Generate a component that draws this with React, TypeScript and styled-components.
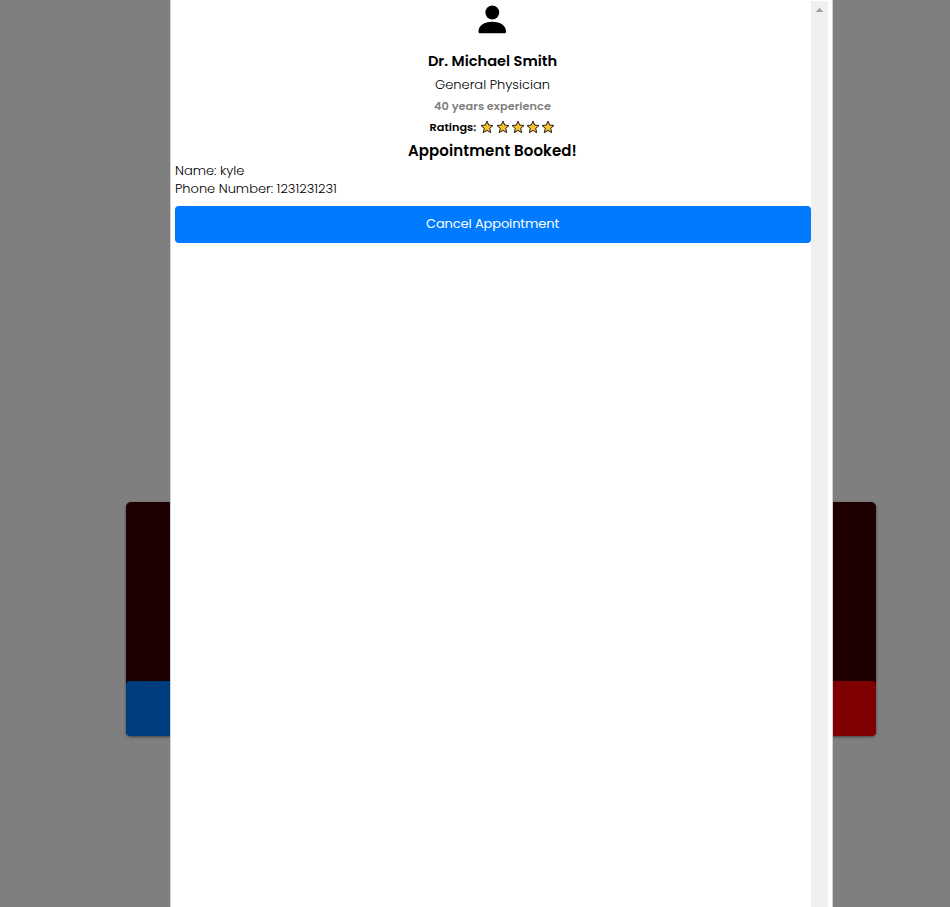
import React from 'react';
import styled, { createGlobalStyle } from 'styled-components';

const GlobalStyle = createGlobalStyle`
  * { box-sizing: border-box; }
  body {
    margin: 0;
    overflow: hidden;
    background: #fff;
    font-family: Poppins, Inter, sans-serif;
    color: #000;
  }
`;

const Page = styled.main`
  height: 907px;
  padding: 502px 74px 0 126px;
`;

const Card = styled.section`
  display: flex;
  flex-direction: column;
  height: 234px;
  background: #3c0000;
  border-radius: 5px;
  box-shadow: 0 1px 3px rgba(0, 0, 0, 0.5);
`;

const CardActions = styled.div`
  display: grid;
  grid-template-columns: 1fr 1fr;
  height: 55px;
  margin-top: auto;
`;

const CardAction = styled.div<{ $color: string }>`
  background: ${({ $color }) => $color};
  border-radius: 4px;
`;

const Overlay = styled.div`
  position: fixed;
  inset: 0;
  display: flex;
  padding-left: 170px;
  background: rgba(0, 0, 0, 0.5);
`;

const Modal = styled.div`
  display: flex;
  width: 663px;
  height: 100%;
  padding: 0 4px;
  background: #fff;
  border: solid #d2d2d2;
  border-width: 0 1px;
`;

const Content = styled.div`
  display: flex;
  flex-direction: column;
  width: 636px;
`;

const ScrollTrack = styled.div`
  display: flex;
  justify-content: center;
  width: 17px;
  margin-top: 1px;
  padding-top: 7px;
  background: #f0f0f0;
`;

const Avatar = styled.svg`
  display: block;
  align-self: center;
  width: 28px;
  height: 28px;
  margin: 5px 2px 17px 0;
  overflow: visible;
`;

const Line = styled.div<{ $size: number; $height: number; $weight?: number; $spacing?: number; $color?: string; $left?: boolean }>`
  display: flex;
  align-items: center;
  justify-content: ${({ $left }) => ($left ? 'flex-start' : 'center')};
  height: ${({ $height }) => $height}px;
  padding-right: 1px;
  font-size: ${({ $size }) => $size}px;
  font-weight: ${({ $weight = 400 }) => $weight};
  letter-spacing: ${({ $spacing = 0 }) => $spacing}px;
  color: ${({ $color = '#000' }) => $color};
  white-space: nowrap;
`;

const Stars = styled.span`
  display: flex;
  gap: 1.3px;
  margin-left: 4px;
`;

const CancelButton = styled.button`
  height: 37px;
  margin: 8px 0 0;
  padding: 0 1px 2px 0;
  border: 0;
  border-radius: 4px;
  background: #007bff;
  color: #fff;
  font: inherit;
  font-size: 13px;
  letter-spacing: -0.12px;
`;

const Star = () => (
  <svg width="14" height="14" viewBox="0 0 14 14">
    <path
      d="M7 1.1 8.7 5.1 13 5.5 9.7 8.3 10.7 12.7 7 10.4 3.3 12.7 4.3 8.3 1 5.5 5.3 5.1Z"
      fill="#fcc02e"
      stroke="#252018"
      strokeWidth="1"
      strokeLinejoin="round"
    />
  </svg>
);

export default function App() {
  return (
    <>
      <GlobalStyle />
      <Page>
        <Card>
          <CardActions>
            <CardAction $color="#007bff" />
            <CardAction $color="#ff0000" />
          </CardActions>
        </Card>
      </Page>
      <Overlay>
        <Modal>
          <Content>
            <Avatar viewBox="0 0 28 28">
              <circle cx="14.3" cy="7.5" r="6.9" />
              <path d="M2.4 28.3C1.2 28.3.5 27.6.5 26.4c0-5.6 5.4-9.7 13.8-9.7s13.8 4.1 13.8 9.7c0 1.2-.8 1.9-2 1.9Z" />
            </Avatar>
            <Line $size={14.6} $height={23} $weight={600}>Dr. Michael Smith</Line>
            <Line $size={13} $height={23} $weight={300}>General Physician</Line>
            <Line $size={11.3} $height={20} $weight={600} $color="#808080" $spacing={0.05}>40 years experience</Line>
            <Line $size={11.3} $height={22} $weight={600}>
              Ratings:
              <Stars>{[1, 2, 3, 4, 5].map((n) => <Star key={n} />)}</Stars>
            </Line>
            <Line $size={15} $height={24} $weight={600} $spacing={0.1}>Appointment Booked!</Line>
            <Line $size={13} $height={18} $weight={300} $left>Name: kyle</Line>
            <Line $size={13} $height={18} $weight={300} $spacing={-0.01} $left>Phone Number: 1231231231</Line>
            <CancelButton>Cancel Appointment</CancelButton>
          </Content>
          <ScrollTrack>
            <svg width="7" height="4" viewBox="0 0 7 4" shapeRendering="crispEdges">
              <path d="M3 0h1v1h1v1h1v1h1v1H0V3h1V2h1V1h1Z" fill="#a3a3a3" />
            </svg>
          </ScrollTrack>
        </Modal>
      </Overlay>
    </>
  );
}
